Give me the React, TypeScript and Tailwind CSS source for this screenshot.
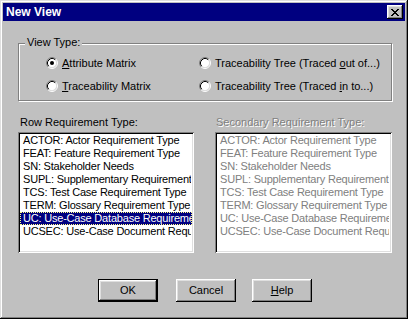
import React from 'react';

const ROWS = [
  'ACTOR: Actor Requirement Type',
  'FEAT: Feature Requirement Type',
  'SN: Stakeholder Needs',
  'SUPL: Supplementary Requirement Type',
  'TCS: Test Case Requirement Type',
  'TERM: Glossary Requirement Type',
  'UC: Use-Case Database Requirement Type',
  'UCSEC: Use-Case Document Requirement Type',
];

const X_PIXELS = ['11000011', '01100110', '00111100', '00011000', '00111100', '01100110', '11000011'];

function CloseGlyph() {
  return (
    <svg width="8" height="7" viewBox="0 0 8 7" shapeRendering="crispEdges">
      {X_PIXELS.flatMap((row, y) =>
        row.split('').map((c, x) => (c === '1' ? <rect key={`${x}-${y}`} x={x} y={y} width="1" height="1" fill="#000" /> : null))
      )}
    </svg>
  );
}

function Radio({ checked }: { checked?: boolean }) {
  return (
    <svg width="12" height="12" viewBox="0 0 12 12" className="shrink-0">
      <circle cx="6" cy="6" r="4.5" fill="#fff" />
      <path d="M2.11 9.89 A5.5 5.5 0 0 1 9.89 2.11" stroke="#808080" strokeWidth="1" fill="none" />
      <path d="M9.89 2.11 A5.5 5.5 0 0 1 2.11 9.89" stroke="#fff" strokeWidth="1" fill="none" />
      <path d="M2.82 9.18 A4.5 4.5 0 0 1 9.18 2.82" stroke="#000" strokeWidth="1" fill="none" />
      <path d="M9.18 2.82 A4.5 4.5 0 0 1 2.82 9.18" stroke="#dfdfdf" strokeWidth="1" fill="none" />
      {checked && <circle cx="6" cy="6" r="2" fill="#000" />}
    </svg>
  );
}

function RadioItem({ checked, children }: { checked?: boolean; children: React.ReactNode }) {
  return (
    <div className="flex items-center gap-[4px] h-[12px] whitespace-nowrap">
      <Radio checked={checked} />
      <span className="leading-[13px]">{children}</span>
    </div>
  );
}

function ListBox({ disabled, width }: { disabled?: boolean; width: string }) {
  return (
    <div
      className={`${width} h-[121px] bg-white overflow-hidden pt-[2px] pl-[2px] pr-[2px] shadow-[inset_1px_1px_0_#808080,inset_-1px_-1px_0_#fff,inset_2px_2px_0_#000,inset_-2px_-2px_0_#dfdfdf]`}
    >
      {ROWS.map((r, i) => {
        const sel = !disabled && i === 6;
        return (
          <div
            key={r}
            className={`h-[13px] leading-[11px] pl-[2px] whitespace-nowrap overflow-hidden border border-dotted tracking-[-0.2px] ${
              sel ? 'bg-[#000080] text-white border-[#ffff80]' : 'border-transparent'
            } ${disabled ? 'text-[#808080]' : 'text-black'}`}
          >
            {r}
          </div>
        );
      })}
    </div>
  );
}

function Button({ children, isDefault }: { children: React.ReactNode; isDefault?: boolean }) {
  return (
    <div className={`w-[60px] h-[23px] ${isDefault ? 'border border-black' : ''}`}>
      <div className="w-full h-full flex items-center justify-center shadow-[inset_-1px_-1px_0_#000,inset_1px_1px_0_#fff,inset_-2px_-2px_0_#808080,inset_2px_2px_0_#dfdfdf]">
        {children}
      </div>
    </div>
  );
}

export default function App() {
  return (
    <div className="w-[408px] h-[319px] bg-[#c0c0c0] p-[3px] flex flex-col text-[11px] text-black font-['Liberation_Sans',Arial,sans-serif] shadow-[inset_-1px_-1px_0_#000,inset_1px_1px_0_#dfdfdf,inset_-2px_-2px_0_#808080,inset_2px_2px_0_#fff]">
      {/* title bar */}
      <div className="h-[18px] bg-[#000080] flex items-center justify-between pl-[3px] pr-[2px]">
        <span className="text-white font-bold text-[12px] leading-[14px]">New View</span>
        <div className="w-[16px] h-[14px] bg-[#c0c0c0] flex items-center justify-center shadow-[inset_-1px_-1px_0_#000,inset_1px_1px_0_#fff,inset_-2px_-2px_0_#808080,inset_2px_2px_0_#dfdfdf]">
          <CloseGlyph />
        </div>
      </div>

      {/* view type group */}
      <div className="relative mt-[22px] ml-[15px] w-[374px] h-[58px] border border-[#808080] shadow-[1px_1px_0_#fff,inset_1px_1px_0_#fff] pt-[13px] pl-[27px]">
        <span className="absolute left-[6px] -top-[8px] px-[2px] bg-[#c0c0c0] leading-[13px]">View Type:</span>
        <div className="grid grid-cols-[153px_1fr] gap-y-[11px]">
          <RadioItem checked>
            <span className="underline">A</span>ttribute Matrix
          </RadioItem>
          <RadioItem>
            Traceability Tree (Traced <span className="underline">o</span>ut of...)
          </RadioItem>
          <RadioItem>
            <span className="underline">T</span>raceability Matrix
          </RadioItem>
          <RadioItem>
            Traceability Tree (Traced <span className="underline">i</span>n to...)
          </RadioItem>
        </div>
      </div>

      {/* list labels */}
      <div className="flex mt-[15px] ml-[17px] h-[13px] leading-[13px]">
        <span className="w-[196px]">Row Requirement Type:</span>
        <span className="text-[#808080] [text-shadow:1px_1px_0_#fff]">Secondary Requirement Type:</span>
      </div>

      {/* lists */}
      <div className="flex mt-[3px] ml-[15px] gap-[21px]">
        <ListBox width="w-[176px]" />
        <ListBox width="w-[177px]" disabled />
      </div>

      {/* buttons */}
      <div className="flex mt-[26px] ml-[95px]">
        <Button isDefault>OK</Button>
        <div className="ml-[18px]">
          <Button>Cancel</Button>
        </div>
        <div className="ml-[16px]">
          <Button>
            <span>
              <span className="underline">H</span>elp
            </span>
          </Button>
        </div>
      </div>
    </div>
  );
}
